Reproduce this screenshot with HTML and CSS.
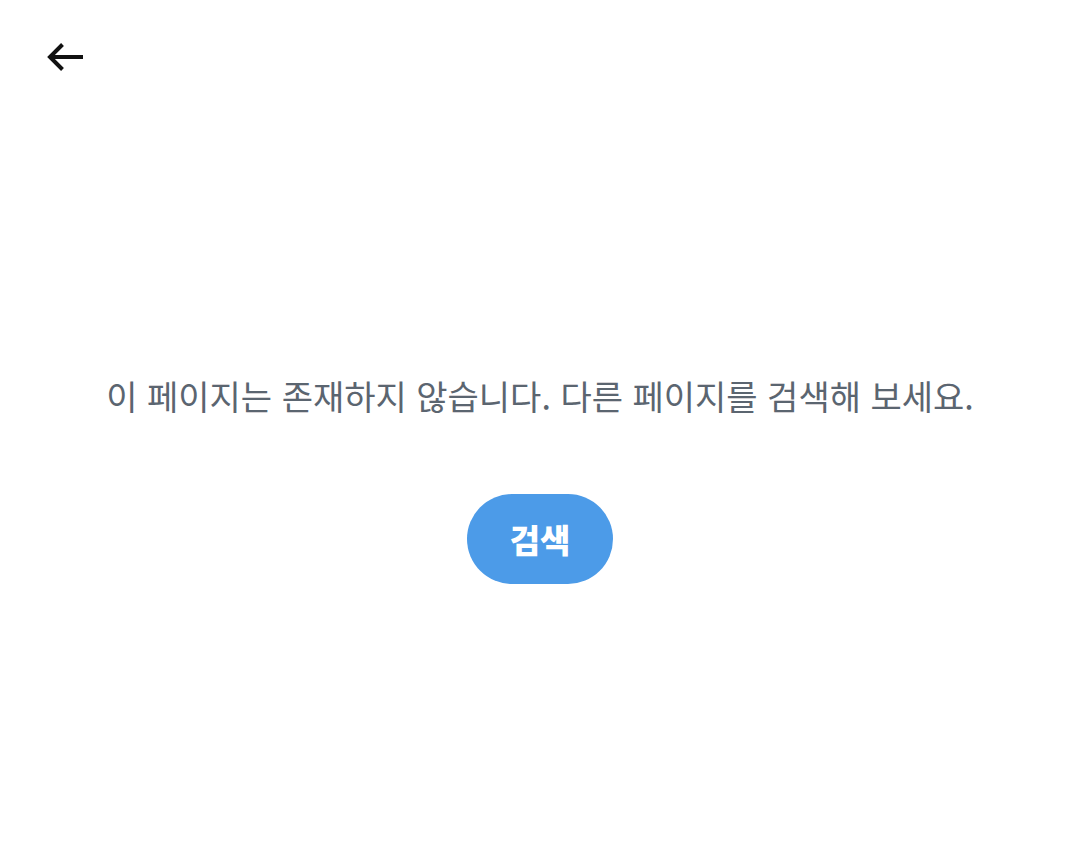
FILE: index.html
```html
<!DOCTYPE html>
<html lang="ko">
<head>
<meta charset="utf-8">
<link rel="stylesheet" href="styles.css">
</head>
<body>
<div class="page">
  <header class="top">
    <button class="back" aria-label="뒤로">
      <svg width="40" height="34" viewBox="0 0 40 34"><path d="M38 17H5M17.5 4.5L5 17l12.5 12.5" fill="none" stroke="#111" stroke-width="4" stroke-linecap="butt" stroke-linejoin="miter"/></svg>
    </button>
  </header>
  <main class="content">
    <p class="msg">이 페이지는 존재하지 않습니다. 다른 페이지를 검색해 보세요.</p>
    <button class="search">검색</button>
  </main>
</div>
</body>
</html>
```
FILE: styles.css
```css
html, body { margin: 0; padding: 0; background: #fff; }
body { font-family: "Noto Sans CJK KR", "Noto Sans", sans-serif; width: 1080px; height: 852px; overflow: hidden; }
.page { display: flex; flex-direction: column; height: 852px; }
.top { height: 116px; padding: 40px 0 0 45px; box-sizing: border-box; }
.back { border: 0; background: none; padding: 0; width: 40px; height: 34px; display: block; }
.back svg { display: block; }
.content { display: flex; flex-direction: column; align-items: center; padding-top: 256px; }
.msg { margin: 0; font-size: 34px; line-height: 48px; color: #5b6570; }
.search { margin-top: 74px; width: 146px; height: 90px; border: 0; border-radius: 45px; background: #4c9be8; color: #fff; font-family: "Noto Sans CJK KR", sans-serif; font-weight: 800; font-size: 33px; }
```
